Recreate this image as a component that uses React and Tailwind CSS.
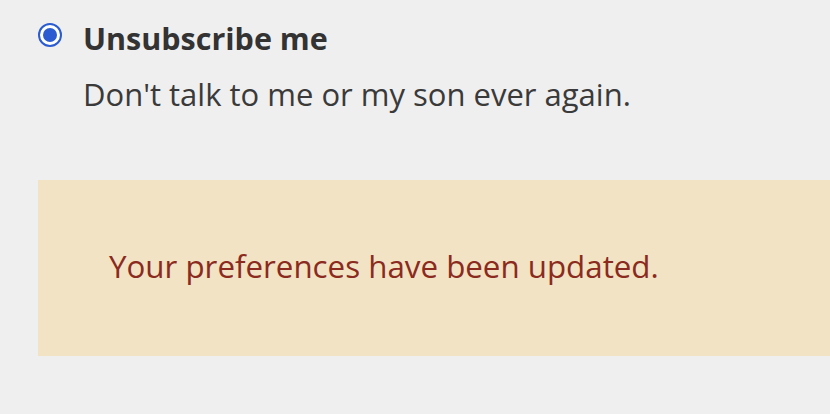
export default function App() {
  return (
    <div className="min-h-[414px] w-[830px] overflow-hidden bg-[#efefef] pt-[20px] pl-[38px]" style={{ fontFamily: '"Open Sans", "Noto Sans", sans-serif' }}>
      <div className="flex items-start gap-[21px]">
        <div className="mt-[3px] flex h-6 w-6 shrink-0 items-center justify-center rounded-full border-2 border-[#2a5bd0] bg-white">
          <div className="h-[14px] w-[14px] rounded-full bg-[#2a5bd0]" />
        </div>
        <div className="flex flex-col">
          <div className="text-[30.5px] font-bold leading-[36px] text-[#333333]">Unsubscribe me</div>
          <div className="mt-[19px] text-[31px] leading-[38px] text-[#3a3a3a]">Don't talk to me or my son ever again.</div>
        </div>
      </div>
      <div className="mt-[67px] flex h-[176px] items-center bg-[#f1e3c3] pb-[4px] pl-[71px]">
        <div className="text-[31.3px] leading-[38px] text-[#8b2a1e]">Your preferences have been updated.</div>
      </div>
    </div>
  );
}
